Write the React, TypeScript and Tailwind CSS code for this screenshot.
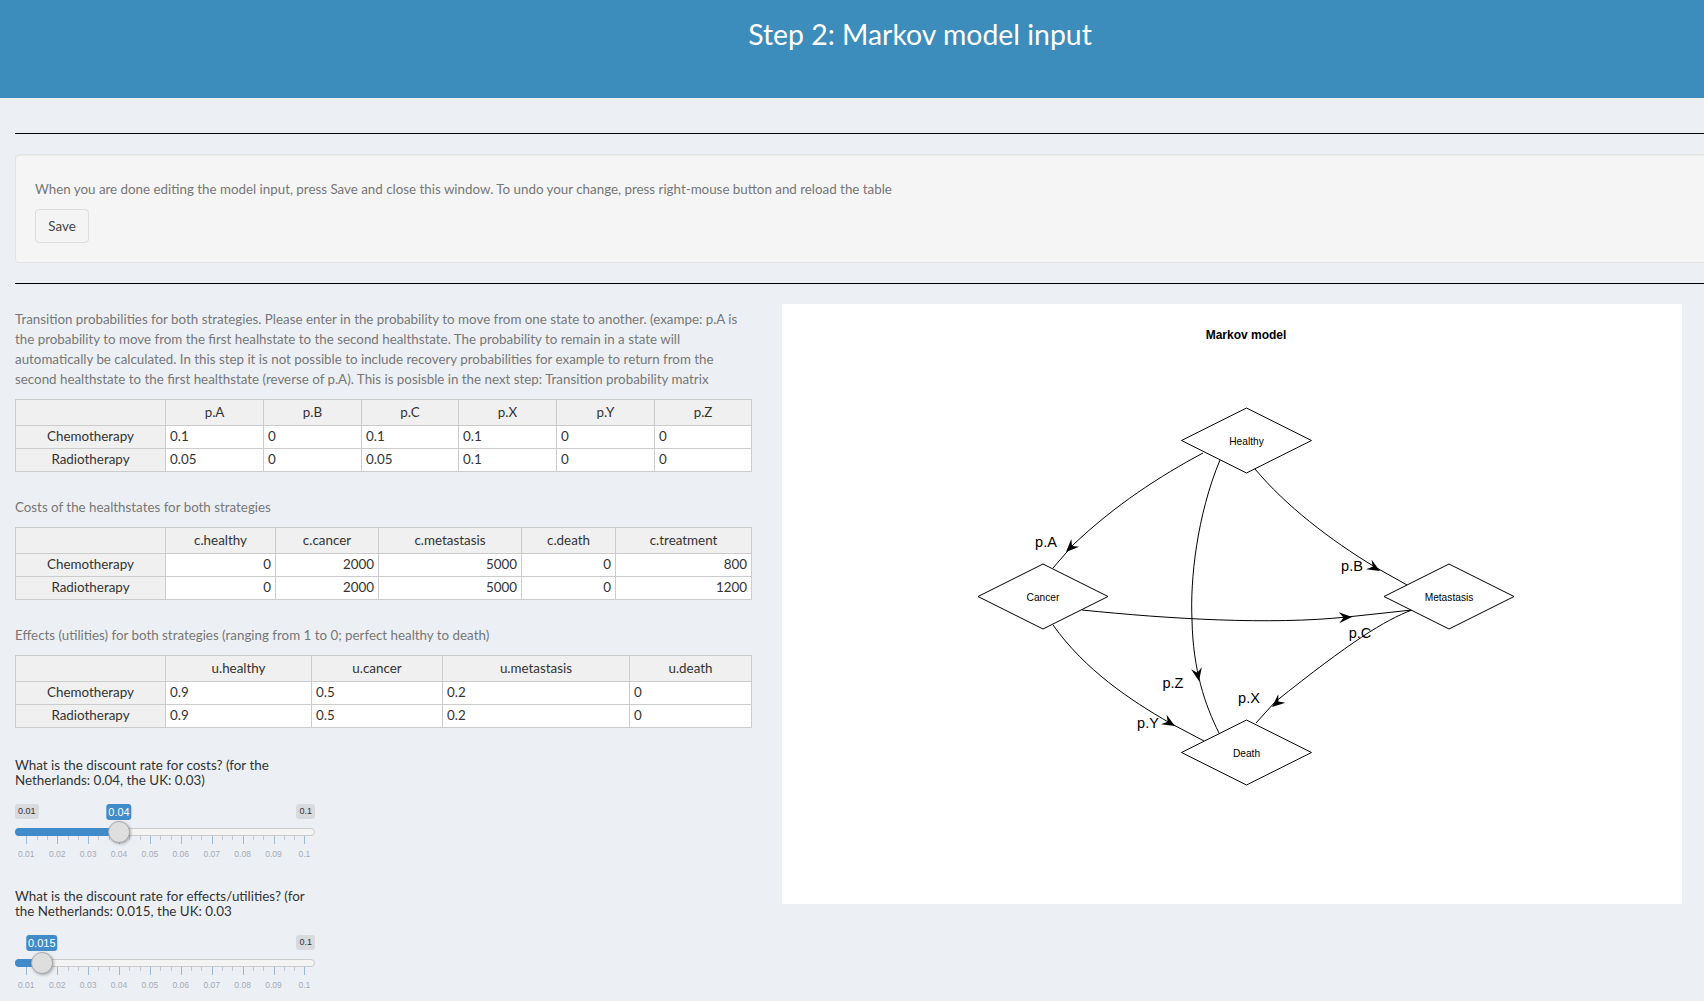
import React from "react";

const sans = "font-['Lato','Noto_Sans',sans-serif]";

type TableProps = {
  cols: string[];
  head: string[];
  rows: (string | number)[][];
  numeric?: boolean;
};

/* ---------------- HANDSONTABLE STYLE GRID ---------------- */
function InputTable({ cols, head, rows, numeric }: TableProps) {
  return (
    <table className="w-[736px] table-fixed border-collapse text-[13.4px] text-[#333]">
      <colgroup>
        {cols.map((c, i) => (
          <col key={i} className={c} />
        ))}
      </colgroup>
      <thead>
        <tr className="h-[26px] bg-[#f0f0f0]">
          <th className="border border-[#ccc] font-normal"></th>
          {head.map((h) => (
            <th key={h} className="border border-[#ccc] font-normal">
              {h}
            </th>
          ))}
        </tr>
      </thead>
      <tbody>
        {rows.map((r, i) => (
          <tr key={i} className="h-[23px]">
            <th className="border border-[#ccc] bg-[#f0f0f0] pb-[2px] font-normal leading-[20px]">
              {i === 0 ? "Chemotherapy" : "Radiotherapy"}
            </th>
            {r.map((v, j) => (
              <td
                key={j}
                className={`border border-[#ccc] bg-white px-1 pb-[2px] leading-[20px] ${
                  numeric ? "text-right" : "text-left"
                }`}
              >
                {v}
              </td>
            ))}
          </tr>
        ))}
      </tbody>
    </table>
  );
}

/* ---------------- ION RANGE SLIDER ---------------- */
const tickLabels = ["0.01", "0.02", "0.03", "0.04", "0.05", "0.06", "0.07", "0.08", "0.09", "0.1"];
const FIRST_TICK = 11.3;
const TICK_GAP = 30.9;

function Slider({ value, label }: { value: number; label: string }) {
  const x = FIRST_TICK + ((value - 0.01) / 0.01) * TICK_GAP;
  const minor: number[] = [];
  for (let i = 0; i < 27; i++) {
    if (i % 3 !== 0) minor.push(FIRST_TICK + (i * TICK_GAP) / 3);
  }
  return (
    <div className="relative mt-[16px] h-[58px] w-[300px] font-['Liberation_Sans',sans-serif]">
      {value >= 0.02 && (
        <span className="absolute left-0 top-0 rounded-[3px] bg-[#d8dade] px-[3px] text-[9px] leading-[15px] text-[#333]">
          0.01
        </span>
      )}
      <span className="absolute right-0 top-0 rounded-[3px] bg-[#d8dade] px-[3px] text-[9px] leading-[15px] text-[#333]">
        0.1
      </span>
      <span
        className="absolute top-0 -translate-x-1/2 rounded-[3px] bg-[#428bca] px-[2px] text-[11px] leading-[16px] text-white"
        style={{ left: x }}
      >
        {label}
      </span>
      <div className="absolute left-0 top-[24px] h-[8px] w-[300px] rounded-full border border-[#ccc] bg-[#f4f4f4]" />
      <div className="absolute left-0 top-[24px] h-[8px] rounded-l-full bg-[#428bca]" style={{ width: x }} />
      {minor.map((m) => (
        <div key={m} className="absolute top-[32px] h-[4px] w-px bg-[#c3c8d0]" style={{ left: m }} />
      ))}
      {tickLabels.map((t, i) => (
        <React.Fragment key={t}>
          <div className="absolute top-[32px] h-[8px] w-px bg-[#9db8d4]" style={{ left: FIRST_TICK + i * TICK_GAP }} />
          <span
            className="absolute top-[44px] -translate-x-1/2 text-[8.5px] leading-[12px] text-[#a4abb8]"
            style={{ left: FIRST_TICK + i * TICK_GAP }}
          >
            {t}
          </span>
        </React.Fragment>
      ))}
      <div
        className="absolute top-[17px] h-[22px] w-[22px] -translate-x-1/2 rounded-full border border-[#aaa] bg-[#dedede] shadow-[1px_1px_3px_rgba(0,0,0,0.3)]"
        style={{ left: x }}
      />
    </div>
  );
}

/* ---------------- MARKOV DIAGRAM ---------------- */
const nodes = [
  { name: "Healthy", x: 1246.5, y: 440.5 },
  { name: "Cancer", x: 1043, y: 596.5 },
  { name: "Metastasis", x: 1449, y: 596.5 },
  { name: "Death", x: 1246.5, y: 752.5 },
];

const edges = [
  "M1203 453 C1160 476 1115 505 1073 545 L1053 568",
  "M1220 460 C1197 515 1190 580 1192 620 C1193 670 1205 705 1219 733",
  "M1255 469 C1285 505 1330 540 1375 567 L1407 585",
  "M1082 610 C1170 619 1270 625 1347 617 L1412 610",
  "M1412 610 C1385 620 1350 642 1275 702 L1256 723",
  "M1053 625 C1085 670 1130 700 1170 723 L1204 741",
];

// stealth arrow heads: tip point plus pointing direction
const arrows = [
  { x: 1066, y: 552, dx: -1, dy: 1 },
  { x: 1199, y: 681, dx: 0.2, dy: 1 },
  { x: 1380, y: 571, dx: 0.85, dy: 0.5 },
  { x: 1352, y: 617, dx: 1, dy: -0.05 },
  { x: 1272, y: 707, dx: -0.75, dy: 0.65 },
  { x: 1175, y: 726, dx: 0.85, dy: 0.5 },
];

function arrowPath(a: { x: number; y: number; dx: number; dy: number }) {
  const len = Math.hypot(a.dx, a.dy);
  const ux = a.dx / len;
  const uy = a.dy / len;
  const back = 13;
  const wide = 5.5;
  const bx = a.x - ux * back;
  const by = a.y - uy * back;
  const nx = a.x - ux * 8.5;
  const ny = a.y - uy * 8.5;
  return `M${a.x} ${a.y} L${bx - uy * wide} ${by + ux * wide} L${nx} ${ny} L${bx + uy * wide} ${by - ux * wide} Z`;
}

const edgeLabels = [
  { t: "p.A", x: 1046, y: 542 },
  { t: "p.B", x: 1352, y: 566 },
  { t: "p.C", x: 1360, y: 633 },
  { t: "p.Z", x: 1173, y: 683 },
  { t: "p.X", x: 1249, y: 698 },
  { t: "p.Y", x: 1148, y: 723 },
];

function MarkovPlot() {
  return (
    <svg viewBox="782 304 900 600" className="h-[600px] w-[900px] bg-white font-['Liberation_Sans',sans-serif]">
      <text x="1246" y="339" textAnchor="middle" fontSize="12" fontWeight="700" fill="#000">
        Markov model
      </text>
      {edges.map((d) => (
        <path key={d} d={d} fill="none" stroke="#000" strokeWidth="1" />
      ))}
      {arrows.map((a) => (
        <path key={a.x} d={arrowPath(a)} fill="#000" />
      ))}
      {nodes.map((n) => (
        <g key={n.name}>
          <path
            d={`M${n.x - 65} ${n.y} L${n.x} ${n.y - 32.5} L${n.x + 65} ${n.y} L${n.x} ${n.y + 32.5} Z`}
            fill="#fff"
            stroke="#000"
            strokeWidth="1"
          />
          <text x={n.x} y={n.y + 4} textAnchor="middle" fontSize="10.2" fill="#000">
            {n.name}
          </text>
        </g>
      ))}
      {edgeLabels.map((l) => (
        <text key={l.t} x={l.x} y={l.y + 5} textAnchor="middle" fontSize="14.5" fill="#000">
          {l.t}
        </text>
      ))}
    </svg>
  );
}

export default function App() {
  return (
    <div className={`h-[1001px] w-[1704px] overflow-hidden bg-[#ecf0f5] ${sans}`}>
      <div className="w-[1840px]">
        <header className="h-[98px] bg-[#3c8dbc] pt-[14px] text-center text-[28.4px] leading-[40px] text-white">
          Step 2: Markov model input
        </header>

        <div className="px-[15px]">
          <hr className="mt-[35px] border-t border-black" />

          <div className="mt-[20px] h-[109px] rounded-[4px] border border-[#e3e3e3] bg-[#f5f5f5] px-[19px] pt-[24px] shadow-[inset_0_1px_1px_rgba(0,0,0,0.05)]">
            <p className="text-[13.35px] leading-[20px] text-[#777]">
              When you are done editing the model input, press Save and close this window. To undo your change, press
              right-mouse button and reload the table
            </p>
            <button className="mt-[10px] h-[34px] w-[54px] rounded-[4px] border border-[#ddd] bg-[#f4f4f4] text-[13.4px] leading-[30px] text-[#444]">
              Save
            </button>
          </div>

          <hr className="mt-[20px] border-t border-black" />

          <div className="mt-[20px] flex gap-[31px]">
            <div className="w-[736px]">
              <p className="mt-[5px] text-[13.35px] leading-[20px] text-[#777]">
                Transition probabilities for both strategies. Please enter in the probability to move from one state to
                another. (exampe: p.A is the probability to move from the first healhstate to the second healthstate.
                The probability to remain in a state will automatically be calculated. In this step it is not possible
                to include recovery probabilities for example to return from the second healthstate to the first
                healthstate (reverse of p.A). This is posisble in the next step: Transition probability matrix
              </p>
              <div className="mt-[10px]">
                <InputTable
                  cols={["w-[150px]", "w-[98px]", "w-[98px]", "w-[97px]", "w-[98px]", "w-[98px]", "w-[97px]"]}
                  head={["p.A", "p.B", "p.C", "p.X", "p.Y", "p.Z"]}
                  rows={[
                    ["0.1", "0", "0.1", "0.1", "0", "0"],
                    ["0.05", "0", "0.05", "0.1", "0", "0"],
                  ]}
                />
              </div>

              <p className="mt-[25px] text-[13.35px] leading-[20px] text-[#777]">
                Costs of the healthstates for both strategies
              </p>
              <div className="mt-[10px]">
                <InputTable
                  numeric
                  cols={["w-[150px]", "w-[110px]", "w-[103px]", "w-[143px]", "w-[94px]", "w-[136px]"]}
                  head={["c.healthy", "c.cancer", "c.metastasis", "c.death", "c.treatment"]}
                  rows={[
                    [0, 2000, 5000, 0, 800],
                    [0, 2000, 5000, 0, 1200],
                  ]}
                />
              </div>

              <p className="mt-[25px] text-[13.35px] leading-[20px] text-[#777]">
                Effects (utilities) for both strategies (ranging from 1 to 0; perfect healthy to death)
              </p>
              <div className="mt-[10px]">
                <InputTable
                  cols={["w-[150px]", "w-[146px]", "w-[131px]", "w-[187px]", "w-[122px]"]}
                  head={["u.healthy", "u.cancer", "u.metastasis", "u.death"]}
                  rows={[
                    ["0.9", "0.5", "0.2", "0"],
                    ["0.9", "0.5", "0.2", "0"],
                  ]}
                />
              </div>

              <p className="mt-[30px] w-[300px] text-[13.4px] leading-[15px] text-[#333]">
                What is the discount rate for costs? (for the Netherlands: 0.04, the UK: 0.03)
              </p>
              <Slider value={0.04} label="0.04" />

              <p className="mt-[27px] w-[300px] text-[13.4px] leading-[15px] text-[#333]">
                What is the discount rate for effects/utilities? (for the Netherlands: 0.015, the UK: 0.03
              </p>
              <Slider value={0.015} label="0.015" />
            </div>

            <MarkovPlot />
          </div>
        </div>
      </div>
    </div>
  );
}
